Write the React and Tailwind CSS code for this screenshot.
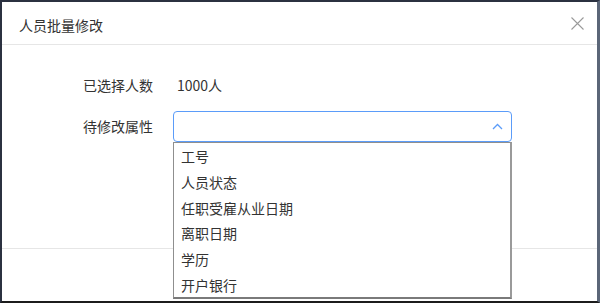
import React from "react";

const items = ["工号", "人员状态", "任职受雇从业日期", "离职日期", "学历", "开户银行"];

export default function App() {
  return (
    <div
      className="relative w-[600px] h-[303px] bg-white border-t-2 border-l-2 border-b-2 border-r-[3px] border-t-[#2b3140] border-l-[#2b3140] border-b-[#1c1c1c] border-r-[#5b6678] flex flex-col text-[#333] text-[14px]"
      style={{ fontFamily: '"Noto Sans CJK SC", "Noto Sans", sans-serif' }}
    >
      <div className="h-[43px] flex items-center justify-between pl-[17px] pr-[13px] border-b border-[#e6e6e6] shrink-0">
        <span className="leading-[20px] pt-[4px]">人员批量修改</span>
        <svg width="13" height="13" viewBox="0 0 13 13">
          <path d="M0.5 0.5 L12.5 12.5 M12.5 0.5 L0.5 12.5" stroke="#9a9a9a" strokeWidth="1.1" fill="none" />
        </svg>
      </div>
      <div className="h-[203px] shrink-0 pt-[25px] flex flex-col gap-[10px] pl-[81px]">
        <div className="h-[31px] flex items-center">
          <span className="w-[90px]">已选择人数</span>
          <span className="ml-[4px]">1000人</span>
        </div>
        <div className="h-[31px] flex items-center relative">
          <span className="w-[90px]">待修改属性</span>
          <div className="w-[339px] h-[31px] border border-[#5b9cf9] rounded-[4px] flex items-center justify-end pr-[8px]">
            <svg width="11" height="7" viewBox="0 0 11 7">
              <path d="M1 6 L5.5 1.5 L10 6" stroke="#5b9cf9" strokeWidth="1.3" fill="none" />
            </svg>
          </div>
          <div className="absolute left-[90px] top-[31px] w-[339px] h-[157px] bg-white border border-[#8f8f8f] border-r-2 border-b-2 border-r-[#9a9a9a] border-b-[#7a7a7a] pt-[1px] flex flex-col z-10">
            {items.map((t) => (
              <div key={t} className="h-[25.7px] flex items-center pl-[7px] shrink-0">
                {t}
              </div>
            ))}
          </div>
        </div>
      </div>
      <div className="flex-1 border-t border-[#e6e6e6]"></div>
    </div>
  );
}
